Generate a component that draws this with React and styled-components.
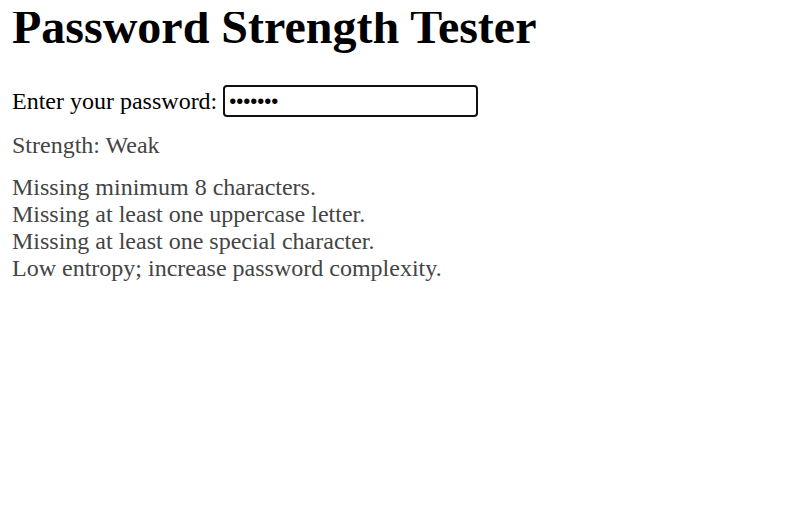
import styled, { createGlobalStyle } from "styled-components";

const GlobalStyle = createGlobalStyle`
  body {
    margin: 12px;
    font-family: "Liberation Serif", "Times New Roman", serif;
    font-size: 24px;
    background: #fff;
    color: #000;
  }
`;

const Title = styled.h1`
  font-size: 48px;
  font-weight: bold;
  line-height: 1.15;
  margin: -13px 0 31px;
`;

const Field = styled.div`
  display: flex;
  align-items: center;
  gap: 6px;
`;

const Label = styled.label`
  color: #000;
`;

const Input = styled.input`
  width: 255px;
  height: 32px;
  box-sizing: border-box;
  border: 2px solid #111;
  border-radius: 4px;
  padding: 0 4px;
  font-family: "Liberation Sans", Arial, sans-serif;
  font-size: 20px;
  outline: none;
`;

const Strength = styled.p`
  margin: 15px 0 0;
  color: #444;
`;

const Issues = styled.ul`
  list-style: none;
  margin: 15px 0 0;
  padding: 0;
  color: #444;
`;

export default function App() {
  const issues = [
    "Missing minimum 8 characters.",
    "Missing at least one uppercase letter.",
    "Missing at least one special character.",
    "Low entropy; increase password complexity.",
  ];
  return (
    <>
      <GlobalStyle />
      <Title>Password Strength Tester</Title>
      <Field>
        <Label htmlFor="pw">Enter your password:</Label>
        <Input id="pw" type="password" defaultValue="abcdefg" />
      </Field>
      <Strength>Strength: Weak</Strength>
      <Issues>
        {issues.map((t) => (
          <li key={t}>{t}</li>
        ))}
      </Issues>
    </>
  );
}
